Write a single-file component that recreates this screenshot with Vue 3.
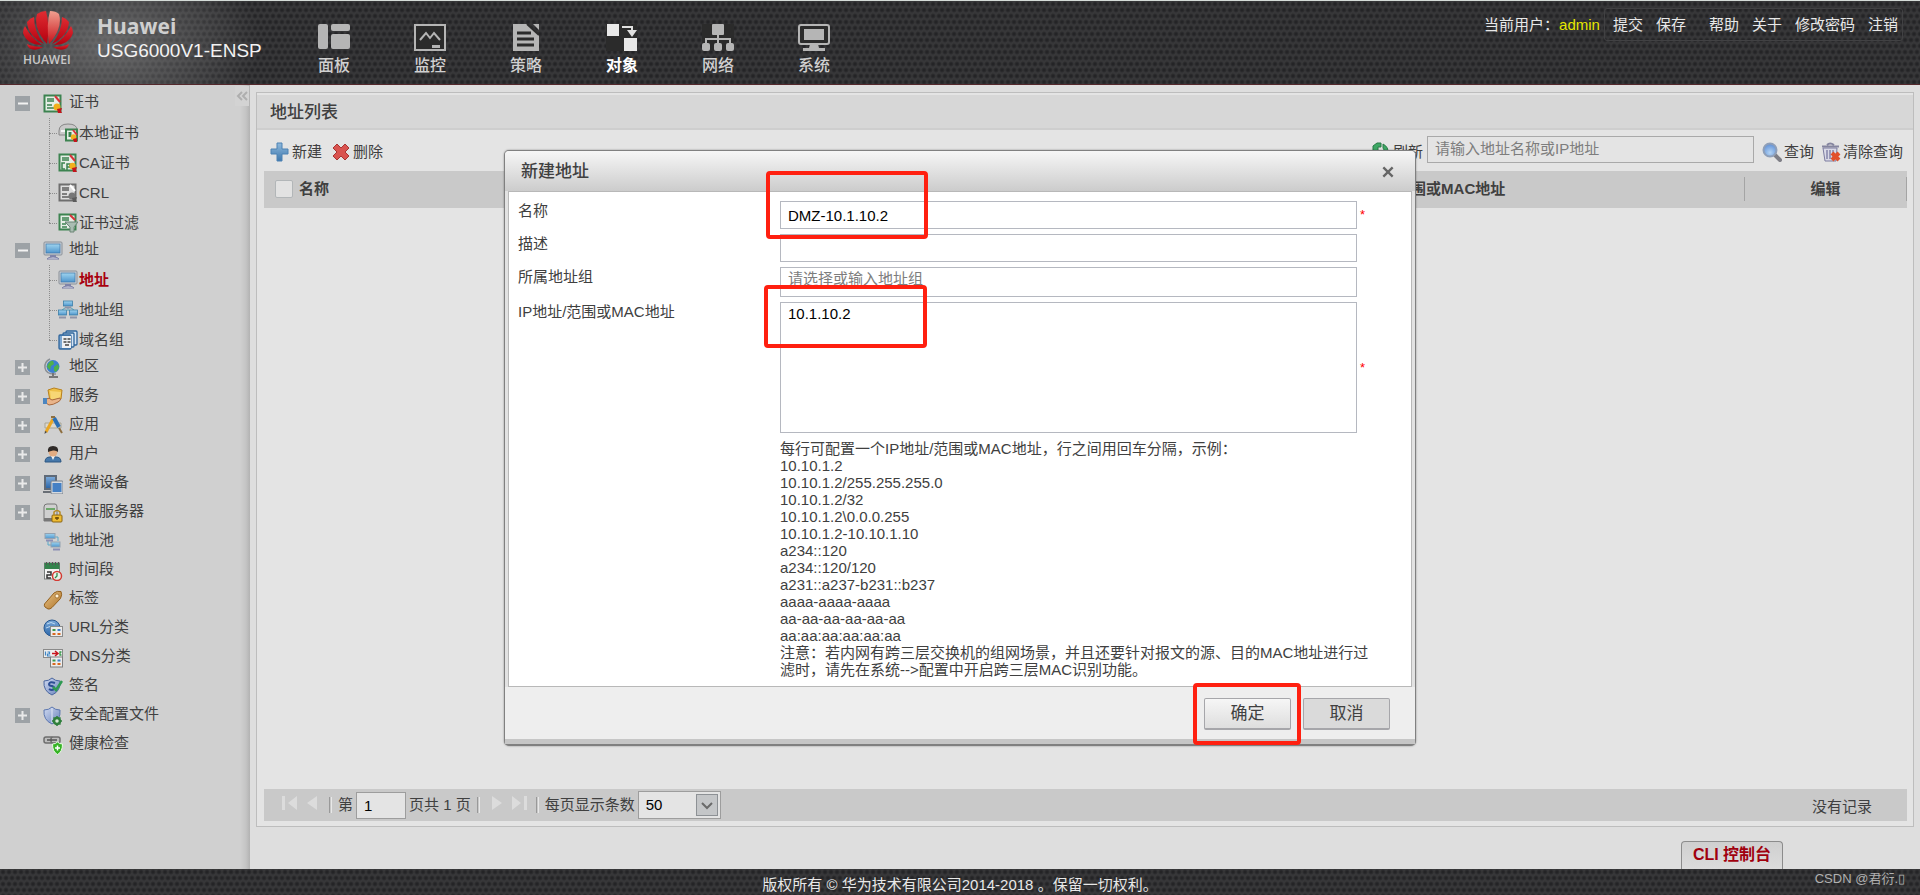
<script setup>
import { ref } from 'vue'

const nav = [
  { label: '面板', icon: 'n-board' },
  { label: '监控', icon: 'n-monitor' },
  { label: '策略', icon: 'n-policy' },
  { label: '对象', icon: 'n-object', active: true },
  { label: '网络', icon: 'n-network' },
  { label: '系统', icon: 'n-system' },
]

const tree = [
  {
    label: '证书', icon: 'i-cert', toggle: 'minus',
    children: [
      { label: '本地证书', icon: 'i-localcert' },
      { label: 'CA证书', icon: 'i-cacert' },
      { label: 'CRL', icon: 'i-crl' },
      { label: '证书过滤', icon: 'i-certfilter' },
    ],
  },
  {
    label: '地址', icon: 'i-pc', toggle: 'minus',
    children: [
      { label: '地址', icon: 'i-pc', active: true },
      { label: '地址组', icon: 'i-pcs' },
      { label: '域名组', icon: 'i-domain' },
    ],
  },
  { label: '地区', icon: 'i-globe', toggle: 'plus' },
  { label: '服务', icon: 'i-service', toggle: 'plus' },
  { label: '应用', icon: 'i-app', toggle: 'plus' },
  { label: '用户', icon: 'i-user', toggle: 'plus' },
  { label: '终端设备', icon: 'i-device', toggle: 'plus' },
  { label: '认证服务器', icon: 'i-server', toggle: 'plus' },
  { label: '地址池', icon: 'i-pool' },
  { label: '时间段', icon: 'i-time' },
  { label: '标签', icon: 'i-tag' },
  { label: 'URL分类', icon: 'i-url' },
  { label: 'DNS分类', icon: 'i-dns' },
  { label: '签名', icon: 'i-sign' },
  { label: '安全配置文件', icon: 'i-profile', toggle: 'plus' },
  { label: '健康检查', icon: 'i-health' },
]

const examples = [
  '10.10.1.2',
  '10.10.1.2/255.255.255.0',
  '10.10.1.2/32',
  '10.10.1.2\\0.0.0.255',
  '10.10.1.2-10.10.1.10',
  'a234::120',
  'a234::120/120',
  'a231::a237-b231::b237',
  'aaaa-aaaa-aaaa',
  'aa-aa-aa-aa-aa-aa',
  'aa:aa:aa:aa:aa:aa',
]

const name = ref('DMZ-10.1.10.2')
const desc = ref('')
const group = ref('')
const ips = ref('10.1.10.2')
const page = ref('1')
const size = ref('50')
const query = ref('')
</script>

<template>
  <div class="page">
    <svg class="defs" aria-hidden="true">
      <defs>
        <linearGradient id="g-screen" x1="0" y1="0" x2="0" y2="1"><stop offset="0" stop-color="#9fd4ef" /><stop offset="1" stop-color="#4f96cd" /></linearGradient>
        <linearGradient id="g-petal" x1="0" y1="0" x2="0" y2="1"><stop offset="0" stop-color="#e02c32" /><stop offset="1" stop-color="#b4000f" /></linearGradient>
        <linearGradient id="g-petal2" x1="0" y1="0" x2="0" y2="1"><stop offset="0" stop-color="#f0a090" /><stop offset="1" stop-color="#c81018" /></linearGradient>
        <linearGradient id="g-shield" x1="0" y1="0" x2="1" y2="1"><stop offset="0" stop-color="#d3dcf2" /><stop offset="1" stop-color="#6681bb" /></linearGradient>
        <linearGradient id="g-tag" x1="0" y1="0" x2="1" y2="1"><stop offset="0" stop-color="#e9c489" /><stop offset="1" stop-color="#ad7226" /></linearGradient>
        <linearGradient id="g-tree" x1="0" y1="0" x2="0" y2="1"><stop offset="0" stop-color="#7aa8d8" /><stop offset="1" stop-color="#2c67aa" /></linearGradient>
        <linearGradient id="g-plus" x1="0" y1="0" x2="0" y2="1"><stop offset="0" stop-color="#8fb9dc" /><stop offset="1" stop-color="#3f78ad" /></linearGradient>
        <radialGradient id="g-lens" cx=".5" cy=".7" r=".7"><stop offset="0" stop-color="#b4d4f4" /><stop offset="1" stop-color="#5b8cd4" /></radialGradient>
      </defs>

      <symbol id="n-board" viewBox="0 0 32 28"><g fill="#b5b5b5"><rect width="10" height="25" rx="2" /><rect x="13" width="19" height="7" rx="2" /><rect x="13" y="10" width="19" height="15" rx="2" /></g></symbol>
      <symbol id="n-monitor" viewBox="0 0 32 28"><rect x="1" y="1" width="30" height="25" fill="#2b2b2b" stroke="#b5b5b5" stroke-width="2" /><path d="M6 16l6-7 4 5 4-5 6 7" fill="none" stroke="#b5b5b5" stroke-width="2" /><rect x="18" y="21" width="8" height="3" fill="#b5b5b5" /></symbol>
      <symbol id="n-policy" viewBox="0 0 32 28"><path fill="#b5b5b5" d="M3 0h14l12 11v16H3z" /><path fill="#b5b5b5" d="M23 0h6v6z" /><path d="M17 0l12 11" stroke="#2b2b2b" stroke-width="2" /><path d="M7 9h14M7 15h17M7 21h17" stroke="#2b2b2b" stroke-width="3" /></symbol>
      <symbol id="n-object" viewBox="0 0 32 28"><rect width="31" height="27" fill="#2b2b2b" /><rect x="1" width="12" height="12" fill="#e8e8e8" /><rect x="18" y="14" width="13" height="13" fill="#e8e8e8" /><path d="M16 3h10v5" fill="none" stroke="#e0e0e0" stroke-width="2" /><path d="M21 6h10l-5 7z" fill="#e0e0e0" /></symbol>
      <symbol id="n-network" viewBox="0 0 32 28"><rect width="32" height="27" fill="#2b2b2b" /><g fill="#b5b5b5"><rect x="10" width="12" height="11" rx="1" /><rect y="19" width="8" height="8" rx="2" /><rect x="12" y="19" width="8" height="8" rx="2" /><rect x="24" y="19" width="8" height="8" rx="2" /></g><path d="M4 20v-5h24v5M16 10v10" fill="none" stroke="#b5b5b5" stroke-width="2" /></symbol>
      <symbol id="n-system" viewBox="0 0 32 28"><rect x="1" y="1" width="30" height="19" rx="2" fill="#2b2b2b" stroke="#b5b5b5" stroke-width="2" /><rect x="6" y="5" width="20" height="11" fill="#b5b5b5" /><path fill="#b5b5b5" d="M12 20h8l1 4h6v3H5v-3h6z" /></symbol>

      <symbol id="i-cert" viewBox="0 0 20 20"><rect x="1.5" y="1.5" width="16" height="16" fill="#e6eee6" stroke="#3c8350" stroke-width="2" /><path d="M4 5h7M4 7h7M4 11h5M4 14h7" stroke="#3c8350" stroke-width="1.3" /><path d="M12 2l5 6" stroke="#d8323a" stroke-width="2" /><circle cx="14" cy="13" r="3.5" fill="#f2b01c" /><path d="M14 15l5-1-1 3 1 2h-4z" fill="#c3141c" /></symbol>
      <symbol id="i-localcert" viewBox="0 0 20 20"><path d="M1 8Q1 1 10 1t9 6v5H1z" fill="#c9c9c9" stroke="#868686" /><path d="M3 8h12" stroke="#f4f4f4" stroke-width="2" /><rect x="8" y="6.500" width="11" height="11" fill="#e6eee6" stroke="#3c8350" stroke-width="2" /><rect x="10.500" y="9" width="3" height="5" fill="#3c8350" /><path d="M15 7l4 5" stroke="#d8323a" stroke-width="2" /><circle cx="15.500" cy="14" r="2.800" fill="#f2b01c" /><path d="M15 16l4-1v4h-3z" fill="#c3141c" /></symbol>
      <symbol id="i-cacert" viewBox="0 0 20 20"><rect x="1.500" y="1.500" width="16" height="16" fill="#e6eee6" stroke="#3c8350" stroke-width="2" /><path d="M4 5h7M4 7h7" stroke="#3c8350" stroke-width="1.300" /><path d="M7 10H4v6h3M9 17v-6h3v4M9 14h3" fill="none" stroke="#3c8350" stroke-width="1.500" /><path d="M12 2l5 6" stroke="#d8323a" stroke-width="2" /><circle cx="14.500" cy="13" r="3.200" fill="#f2b01c" /><path d="M14 15l5-1-1 3 1 2h-4z" fill="#c3141c" /></symbol>
      <symbol id="i-crl" viewBox="0 0 20 20"><rect x="1.500" y="1.500" width="16" height="16" fill="#dedede" stroke="#6e6e6e" stroke-width="2" /><path d="M4 5h7M4 7h7M4 11h5M4 14h7" stroke="#5f5f5f" stroke-width="1.300" /><path d="M12 2l5 6" stroke="#fff" stroke-width="2" /><circle cx="14" cy="13" r="3.500" fill="#777" /><path d="M14 15l5-1-1 3 1 2h-4z" fill="#5c5c5c" /></symbol>
      <symbol id="i-certfilter" viewBox="0 0 20 20"><rect x="1.500" y="1.500" width="16" height="15" fill="#e6eee6" stroke="#3c8350" stroke-width="2" /><path d="M4 5h7M4 7h7M4 11h4M4 14h5" stroke="#3c8350" stroke-width="1.300" /><path d="M12 2l5 5" stroke="#d8323a" stroke-width="2" /><path d="M7 9h13l-4 5v5h-4v-5z" fill="#a9bdb2" stroke="#6d8577" /></symbol>
      <symbol id="i-pc" viewBox="0 0 20 20"><rect x="1" y="1" width="18" height="13" rx="1" fill="#c8cdd3" stroke="#8a9098" /><rect x="3" y="3" width="14" height="9" fill="url(#g-screen)" stroke="#3e77a8" stroke-width=".7" /><path d="M7 14h6v2H7z" fill="#8085aa" /><path d="M4 18q1-2 6-2t6 2z" fill="#e6e6ee" stroke="#7b7fa6" /></symbol>
      <symbol id="i-pcs" viewBox="0 0 20 20"><path d="M10 7v4M3 11l5-4M17 11l-5-4" stroke="#45a0b8" /><g stroke="#3d7fa8" stroke-width=".8" fill="url(#g-screen)"><rect x="5.500" y="1" width="9" height="5" /><rect x=".5" y="10" width="8" height="5" /><rect x="11.500" y="10" width="8" height="5" /></g><path d="M1 17.500h7M12 17.500h7M7 7.500h6" stroke="#8e94a8" stroke-width="2" /></symbol>
      <symbol id="i-domain" viewBox="0 0 20 20"><g fill="#d6e4f2" stroke="#2f659c" stroke-width="1.300"><rect x="8" y="1" width="11" height="14" rx="1" /><rect x="5" y="3" width="11" height="14" rx="1" /><rect x="1" y="5" width="12" height="14" rx="1" fill="#7ba7d2" /></g><rect x="4" y="6" width="9" height="12" fill="#edf0f3" /><path d="M5.500 9h3M9.500 9h3M5.500 12h3M9.500 12h3M7 15h4" stroke="#444" stroke-width="1.300" /></symbol>
      <symbol id="i-globe" viewBox="0 0 20 20"><circle cx="10" cy="8.500" r="6.500" fill="#3c7fd0" /><path d="M5 6q3-4 5-3l1 3-3 2-1 4-3-3zM11 9l4-3 1 4-3 4-2-1z" fill="#4fb04a" /><path d="M7 1Q1 4 2 10t9 6h2" fill="none" stroke="#8a8f94" stroke-width="1.500" /><path d="M10 15v3M6 19h9" stroke="#777" stroke-width="2" /></symbol>
      <symbol id="i-service" viewBox="0 0 20 20"><path d="M5 3l6-2 8 2-1 9-11 2z" fill="#eec048" stroke="#b9811d" /><path d="M7 4l11 1-1 6-9 2z" fill="#f7d675" /><path d="M3 12q3-2 6 1l8-2q2 2-2 4-5 3-9 3l-3-2z" fill="#e9b48a" stroke="#a8683c" /><path d="M0 11h4v6H0z" fill="#4c86c0" /></symbol>
      <symbol id="i-app" viewBox="0 0 20 20"><path d="M2 7h16v5H2z" fill="#dcd8ce" stroke="#a9a595" /><path d="M10 3L3 16" stroke="#eaa622" stroke-width="3" /><path d="M11 2l5 9" stroke="#2a6fb5" stroke-width="4" /><path d="M16 12l3 5M8 1h4" stroke="#8e6f40" stroke-width="2" /><path d="M2 15l-.5 3L4 16z" fill="#444" /></symbol>
      <symbol id="i-user" viewBox="0 0 20 20"><path d="M2 17q0-5 5-5h6q5 0 5 5z" fill="#4678aa" stroke="#2c5682" /><path d="M8 11h4l-2 4z" fill="#f2f2f2" /><circle cx="10" cy="7" r="4.500" fill="#e2ac82" /><path d="M5 7q-1-6 5-6t5 6q-2-2-5-1.500T5 7z" fill="#2f2a28" /></symbol>
      <symbol id="i-device" viewBox="0 0 20 20"><rect x="1" y="1" width="13" height="15" fill="#5f6a78" /><rect x="3" y="3" width="9" height="11" fill="url(#g-tree)" /><path d="M0 18h9" stroke="#6a6f76" stroke-width="2" /><rect x="8" y="7" width="12" height="13" rx="1" fill="#d5dae0" stroke="#79808a" /><rect x="9.500" y="9" width="9" height="9" fill="#4580c4" /></symbol>
      <symbol id="i-server" viewBox="0 0 20 20"><path d="M1 4q0-3 3-3h8q2 0 2 3v14H1z" fill="#cfcfcf" stroke="#767676" /><path d="M3 6h9" stroke="#4d9b48" stroke-width="1.500" /><path d="M1 15h12v3H1z" fill="#777" /><rect x="9" y="12" width="10" height="7" rx="1" fill="#efbc33" stroke="#8a6413" /><path d="M11 12V9q3-3 6 0v3" fill="none" stroke="#b68a25" stroke-width="1.500" /><path d="M12 15h4M14 14v3" stroke="#6b4a08" stroke-width="1.300" /></symbol>
      <symbol id="i-pool" viewBox="0 0 20 20"><path d="M5 9v4h3M12 5h3v4" stroke="#5aa9c8" fill="none" /><g stroke="#93a1b0" fill="url(#g-screen)"><rect x="2" y="1.500" width="10" height="5" /><rect x="8" y="10" width="9" height="5" /></g><path d="M3 8.500h7M10 17.500h7" stroke="#8c8fb4" stroke-width="2" /></symbol>
      <symbol id="i-time" viewBox="0 0 20 20"><rect x="1.500" y="2" width="15" height="16" fill="#f3f3f3" stroke="#7a7f7d" /><rect x="1.500" y="2" width="15" height="6" fill="#33834c" /><path d="M3.500 1v3M6.500 1v3M9.500 1v3M12.500 1v3M15.500 1v3" stroke="#555" /><path d="M4 11h4v3H4v3h4" fill="none" stroke="#333" stroke-width="1.500" /><circle cx="14" cy="15" r="4.500" fill="#e7f1e8" stroke="#d33b33" stroke-width="1.500" /><path d="M14 12v3l-2 2" stroke="#2f8d4a" fill="none" stroke-width="1.300" /></symbol>
      <symbol id="i-tag" viewBox="0 0 20 20"><path d="M1.500 14L11 3q3-2.500 7-1.500 1.500 3-.5 7L9 17.500q-2 2-4 1.500l-3-2q-1-1-.5-3z" fill="url(#g-tag)" stroke="#93601d" /><circle cx="14" cy="6" r="2" fill="#fff3d8" stroke="#93601d" stroke-width=".7" /></symbol>
      <symbol id="i-url" viewBox="0 0 20 20"><circle cx="9" cy="9" r="8" fill="url(#g-tree)" stroke="#27578f" /><path d="M4 5q4-3 8 0M3 9q4-3 8 0" stroke="#bcd8f0" fill="none" /><rect x="7.500" y="7.500" width="12" height="10" fill="#ececec" stroke="#8a8a8a" /><path d="M9.500 11h3" stroke="#3a9a4c" stroke-width="2" /><path d="M14.500 11h3" stroke="#3f7fc6" stroke-width="2" /><path d="M9.500 15h3M14.500 15h3" stroke="#d8681f" stroke-width="2" /></symbol>
      <symbol id="i-dns" viewBox="0 0 20 20"><rect x=".5" y="1.500" width="19" height="8" fill="#eee" stroke="#8a8a8a" /><path d="M2.500 3.500v4M4.500 4h2v2h-2v2h3" stroke="#3f86c6" fill="none" stroke-width="1.200" /><path d="M9 5.500h5M12 3l3 2.500L12 8" stroke="#c8141c" fill="none" stroke-width="1.500" /><path d="M18.500 4H17v3h1.500" stroke="#3a9a4c" fill="none" stroke-width="1.300" /><rect x="7.500" y="9" width="12" height="10" fill="#ececec" stroke="#7d7d7d" /><path d="M9.500 12.500h3" stroke="#3a9a4c" stroke-width="2" /><path d="M14.500 12.500h3" stroke="#3f7fc6" stroke-width="2" /><path d="M9.500 16h3M14.500 16h3" stroke="#d8681f" stroke-width="2" /></symbol>
      <symbol id="i-sign" viewBox="0 0 20 20"><path d="M9 1q3 3 8 3 1 10-8 14Q0 14 1 4q5 0 8-3z" fill="url(#g-shield)" stroke="#4a669f" /><path d="M12 6q-5-2-6 1 0 2 3 2 3 1 2 3-2 2-5 0" fill="none" stroke="#2c4e94" stroke-width="2" /><path d="M10 10l3 3 6-9" fill="none" stroke="#2e9a51" stroke-width="2.500" /></symbol>
      <symbol id="i-profile" viewBox="0 0 20 20"><path d="M9 1q3 3 8 3 1 10-8 14Q0 14 1 4q5 0 8-3z" fill="url(#g-shield)" stroke="#5c77b0" /><path d="M9 2v15" stroke="#e2e8f6" /><circle cx="14" cy="15" r="3" fill="#d8ead8" stroke="#2f7f3c" stroke-width="2.500" /><path d="M14 10v2M14 18v2M9 15h2M17 15h2M10.500 11.500l1.500 1.500M16 17l1.500 1.500M17.500 11.500L16 13" stroke="#2f7f3c" stroke-width="1.500" /></symbol>
      <symbol id="i-health" viewBox="0 0 20 20"><rect x="1" y="2" width="9" height="6" rx="2" fill="#bdbdbd" stroke="#6d6d6d" stroke-width="1.500" /><rect x="8" y="2" width="9" height="6" rx="2" fill="#bdbdbd" stroke="#6d6d6d" stroke-width="1.500" /><path d="M4 5h10" stroke="#555" stroke-width="1.500" /><path d="M14.500 7q2 2 5 2 0 8-5 10.500Q9.500 17 9.500 9q3 0 5-2z" fill="#37b326" stroke="#eafbe6" /><path d="M14.500 10.500v5M12 13h5" stroke="#fff" stroke-width="1.500" /></symbol>
      <symbol id="t-plus" viewBox="0 0 16 16"><rect width="15" height="15" fill="#9da2a6" /><path d="M3 7.500h9M7.500 3v9" stroke="#e9e9e9" stroke-width="2" /></symbol>
      <symbol id="t-minus" viewBox="0 0 16 16"><rect width="15" height="15" fill="#9da2a6" /><path d="M3 7.500h10" stroke="#f2f2f2" stroke-width="2" /></symbol>
    </svg>

    <header class="top dots">
      <div class="brand">
        <svg class="logo" viewBox="0 0 50 40" role="img" aria-label="HUAWEI">
          <path fill="url(#g-petal)" d="M24 33Q10 17 14 3q4-3 9-3 4 14 1 33z" />
          <path fill="url(#g-petal2)" d="M26 33Q23 14 27 0q6 0 9 3 4 14-10 30z" />
          <path fill="url(#g-petal)" d="M21 33Q5 25 4 11q3-4 7-5 0 15 10 27zM29 33q16-8 17-22-3-4-7-5 0 15-10 27z" />
          <path fill="url(#g-petal)" d="M19 34Q4 34 0 22q0-4 2-7 6 12 17 19zM31 34q15 0 19-12 0-4-2-7-6 12-17 19z" />
          <path fill="url(#g-petal)" d="M20 36q-6 4-12 2-3-1-4-5 6 3 16 3zM30 36q6 4 12 2 3-1 4-5-6 3-16 3z" />
        </svg>
        <span class="logo-text">HUAWEI</span>
      </div>
      <div class="product">
        <strong>Huawei</strong>
        <span>USG6000V1-ENSP</span>
      </div>
      <nav class="nav">
        <a v-for="n in nav" :key="n.label" href="#" :class="{ active: n.active }">
          <svg><use :href="'#' + n.icon" /></svg>
          <span>{{ n.label }}</span>
        </a>
      </nav>
      <div class="account">
        <span class="who">当前用户：<b>admin</b></span>
        <div class="links">
          <a href="#">提交</a><a href="#" class="wide">保存</a><a href="#">帮助</a><a href="#">关于</a><a href="#">修改密码</a><a href="#">注销</a>
        </div>
      </div>
    </header>

    <div class="middle">
      <aside class="side">
        <button class="collapse" type="button" aria-label="收起">
          <svg viewBox="0 0 12 10"><path d="M6 1L2 5l4 4M11 1L7 5l4 4" fill="none" stroke="#aeaeae" stroke-width="2" /></svg>
        </button>
        <ul class="tree">
          <li v-for="t in tree" :key="t.label">
            <a class="row" href="#">
              <span class="toggle"><svg v-if="t.toggle"><use :href="'#t-' + t.toggle" /></svg></span>
              <svg class="ico"><use :href="'#' + t.icon" /></svg>
              <span class="txt">{{ t.label }}</span>
            </a>
            <ul v-if="t.children" class="sub">
              <li v-for="c in t.children" :key="c.label">
                <a class="child" :class="{ active: c.active }" href="#">
                  <svg class="ico"><use :href="'#' + c.icon" /></svg>{{ c.label }}
                </a>
              </li>
            </ul>
          </li>
        </ul>
      </aside>

      <main class="main">
        <section class="panel">
          <h1>地址列表</h1>
          <div class="inner">
            <div class="tools">
              <button type="button">
                <svg viewBox="0 0 20 20"><path d="M7 1h5v6h6v5h-6v7H7v-7H1V7h6z" fill="url(#g-plus)" stroke="#4c82b4" stroke-linejoin="round" /></svg>新建
              </button>
              <button type="button">
                <svg viewBox="0 0 20 20"><path d="M6 2l4 4 4-4 4 4-4 4 4 4-4 4-4-4-4 4-4-4 4-4-4-4z" fill="#d9534f" stroke="#a83432" stroke-linejoin="round" /></svg>删除
              </button>
              <div class="find">
                <button type="button">
                  <svg viewBox="0 0 20 20"><path d="M2 11V4l4-3h4v4H7v6zM12 2q6 3 5 10l2 1-5 5-3-6 3 1q0-5-2-7zM3 13h7v4H5z" fill="#3da764" stroke="#287b46" /></svg>刷新
                </button>
                <input v-model="query" class="search" type="text" placeholder="请输入地址名称或IP地址" aria-label="搜索" />
                <button type="button">
                  <svg viewBox="0 0 20 20"><path d="M13 13l5 5" stroke="#7e7e86" stroke-width="4" stroke-linecap="round" /><circle cx="8" cy="8" r="6.500" fill="url(#g-lens)" stroke="#8f9fb8" stroke-width="2" /></svg>查询
                </button>
                <button type="button">
                  <svg viewBox="0 0 20 20"><path d="M2 6h14l-1 13H4z" fill="#d9d9e6" stroke="#7c7ca0" /><path d="M6 8v9M9 8v9M12 8v9" stroke="#8585ab" stroke-width="1.500" /><path d="M1 4.500h17M6 3q3-3 7 0" stroke="#85859f" stroke-width="2" fill="none" /><path d="M11 11l7 7M18 11l-7 7" stroke="#e2502c" stroke-width="4" /></svg>清除查询
                </button>
              </div>
            </div>
            <table class="grid">
              <colgroup><col /><col class="c-ip" /><col class="c-edit" /></colgroup>
              <thead>
                <tr>
                  <th class="name"><label><input type="checkbox" />名称</label></th>
                  <th><span>IP地址/范围或MAC地址</span></th>
                  <th><span>编辑</span></th>
                </tr>
              </thead>
            </table>
            <div class="pager">
              <button type="button" aria-label="首页"><svg viewBox="0 0 16 16"><path d="M0 1h3v14H0zM15 1v14L6 8z" fill="#dcdcdc" /></svg></button>
              <button type="button" aria-label="上一页"><svg viewBox="0 0 16 16"><path d="M13 1v14L3 8z" fill="#dcdcdc" /></svg></button>
              <i></i>
              <label for="pg">第</label>
              <input id="pg" v-model="page" type="text" />
              <span>页共 1 页</span>
              <i></i>
              <button type="button" aria-label="下一页"><svg viewBox="0 0 16 16"><path d="M3 1v14l10-7z" fill="#dcdcdc" /></svg></button>
              <button type="button" aria-label="末页"><svg viewBox="0 0 16 16"><path d="M13 1h3v14h-3zM1 1v14l9-7z" fill="#dcdcdc" /></svg></button>
              <i></i>
              <label for="sz">每页显示条数</label>
              <div class="drop">
                <select id="sz" v-model="size"><option>50</option></select>
                <svg viewBox="0 0 22 22"><rect x=".5" y=".5" width="21" height="21" fill="#c4c6c8" stroke="#8d9195" /><path d="M6 9l5 5 5-5" fill="none" stroke="#6a6a6a" stroke-width="2" /></svg>
              </div>
              <span class="none">没有记录</span>
            </div>
          </div>
        </section>
        <div class="console"><button type="button">CLI 控制台</button></div>
      </main>
    </div>

    <footer class="foot dots">
      <span>版权所有 © 华为技术有限公司2014-2018 。保留一切权利。</span>
      <small>CSDN @君衍.▯</small>
    </footer>

    <div class="mask">
      <form class="dialog" role="dialog" aria-labelledby="dlg-title" @submit.prevent>
        <div class="head">
          <h2 id="dlg-title">新建地址</h2>
          <button type="button" aria-label="关闭"><svg viewBox="0 0 12 12"><path d="M2 2l8 8M10 2l-8 8" stroke="#666" stroke-width="2" /></svg></button>
        </div>
        <div class="body">
          <label for="f-name">名称</label>
          <div class="cell"><input id="f-name" v-model="name" type="text" /><div class="mark m1"></div></div>
          <em>*</em>
          <label for="f-desc">描述</label>
          <div class="cell"><input id="f-desc" v-model="desc" type="text" /></div>
          <em></em>
          <label for="f-group">所属地址组</label>
          <div class="cell"><input id="f-group" v-model="group" class="tall" type="text" placeholder="请选择或输入地址组" /></div>
          <em></em>
          <label for="f-ip">IP地址/范围或MAC地址</label>
          <div class="cell"><textarea id="f-ip" v-model="ips"></textarea><div class="mark m2"></div></div>
          <em>*</em>
          <div class="help">
            <p>每行可配置一个IP地址/范围或MAC地址，行之间用回车分隔，示例：</p>
            <p v-for="e in examples" :key="e">{{ e }}</p>
            <p>注意：若内网有跨三层交换机的组网场景，并且还要针对报文的源、目的MAC地址进行过滤时，请先在系统--&gt;配置中开启跨三层MAC识别功能。</p>
          </div>
        </div>
        <div class="actions">
          <div class="cell"><button type="submit">确定</button><div class="mark m3"></div></div>
          <button type="button" class="cancel">取消</button>
        </div>
      </form>
    </div>
  </div>
</template>

<style>
body { margin: 0; }
</style>

<style scoped>
* { box-sizing: border-box; }
.page {
  position: relative;
  display: flex;
  flex-direction: column;
  min-height: 100vh;
  background: #dedede;
  color: #404040;
  font: 15px/20px "Liberation Sans", "Noto Sans CJK SC", sans-serif;
}
.defs { position: absolute; width: 0; height: 0; }
a { color: inherit; text-decoration: none; }
button, input, select, textarea { font: inherit; color: inherit; margin: 0; }
button { border: 0; background: none; padding: 0; }
ul { list-style: none; margin: 0; padding: 0; }

.dots {
  background-color: #373739;
  background-image:
    radial-gradient(circle at 3px 3px, #242426 1px, transparent 3px),
    radial-gradient(circle at 3px 3px, #242426 1px, transparent 3px);
  background-size: 6px 12px;
  background-position: 0 0, 3px 6px;
}
.top {
  display: flex;
  height: 85px;
  border-top: 1px solid #d5dcd8;
  border-bottom: 1px solid #54282c;
  background-image:
    radial-gradient(ellipse 150px 100px at 110px 42px, rgba(160, 160, 160, .5), transparent),
    radial-gradient(circle at 3px 3px, #242426 1px, transparent 3px),
    radial-gradient(circle at 3px 3px, #242426 1px, transparent 3px);
  background-size: 100% 100%, 6px 12px, 6px 12px;
  background-position: 0 0, 0 0, 3px 6px;
}
.brand { width: 97px; padding: 10px 0 0 23px; display: flex; flex-direction: column; }
.logo { width: 50px; height: 40px; }
.logo-text { font: 600 12px/12px "Open Sans", sans-serif; color: #c9c9c9; margin-top: 3px; }
.product { width: 189px; padding-top: 12px; display: flex; flex-direction: column; }
.product strong { font: bold 21px/26px "Open Sans", sans-serif; color: #cfcfcf; }
.product span { font-size: 19px; line-height: 24px; color: #f2f2f2; }
.nav { display: flex; }
.nav a { width: 96px; display: flex; flex-direction: column; align-items: center; padding-top: 23px; color: #d0d0d0; font-size: 16px; font-weight: 500; }
.nav svg { width: 32px; height: 28px; }
.nav span { line-height: 24px; margin-top: 2px; }
.nav .active { color: #fff; font-weight: bold; }
.account { margin-left: auto; display: flex; align-items: flex-start; padding: 7px 17px 0 0; color: #e8e8e8; }
.who { line-height: 33px; margin-right: 4px; }
.who b { font-weight: normal; color: #e6e600; }
.links { display: flex; border: 1px solid #414143; border-radius: 3px; padding: 0 4px 0 8px; height: 33px; line-height: 31px; gap: 13px; }
.links .wide { margin-right: 10px; }

.middle { flex: 1; display: flex; }
.side {
  position: relative;
  width: 250px;
  padding-top: 4px;
  background: linear-gradient(to right, #d0d0d0 240px, #c4c4c4 246px, #b2b2b2 250px);
}
.collapse { position: absolute; right: 1px; top: 1px; width: 14px; height: 20px; background: #d3d3d3; }
.collapse svg { width: 12px; height: 10px; display: block; margin: 1px; }
.row { display: flex; align-items: center; height: 29px; padding-left: 15px; }
.toggle { width: 28px; height: 16px; }
.toggle svg { width: 16px; height: 16px; display: block; }
.ico { width: 20px; height: 20px; flex: none; }
.txt { margin-left: 6px; padding-bottom: 4px; }
.sub { position: relative; padding-left: 49px; margin-bottom: -2px; }
.sub::before { content: ""; position: absolute; left: 49px; top: 0; bottom: 15px; border-left: 1px dotted #8c8c8c; }
.child { display: flex; align-items: center; height: 30px; gap: 1px; }
.child::before { content: ""; width: 8px; border-top: 1px dotted #8c8c8c; }
.child.active { color: #a8000e; font-weight: bold; }

.main { flex: 1; min-width: 0; display: flex; flex-direction: column; padding: 7px 6px 0; }
.panel { flex: 1; display: flex; flex-direction: column; border: 1px solid #bdbdbd; background: #e4e4e4; }
h1 { margin: 2px 0 0; padding-left: 13px; height: 35px; background: #d7d7d7; border-bottom: 2px solid #cecece; font-size: 17px; line-height: 35px; font-weight: 500; }
.inner { flex: 1; display: flex; flex-direction: column; padding: 4px 6px 5px 7px; }
.tools { display: flex; align-items: center; height: 37px; padding: 0 4px 2px 6px; gap: 9px; }
.tools button { display: flex; align-items: center; gap: 2px; }
.tools svg { width: 20px; height: 20px; }
.find { margin-left: auto; display: flex; align-items: center; gap: 7px; }
.search { width: 327px; height: 27px; margin: 0 1px 4px -3px; border: 1px solid #a9a9a9; background: #e4e4e4; padding: 0 7px 2px; }
.search::placeholder, .tall::placeholder { color: #7d7d7d; opacity: 1; }
.grid { width: 100%; table-layout: fixed; border-collapse: collapse; background: #c9c9c9; }
.c-ip { width: 636px; }
.c-edit { width: 162px; }
th { height: 37px; padding: 0 0 2px; }
th span { display: block; border-right: 1px solid #a4a4a4; line-height: 24px; }
.name { text-align: left; padding-left: 11px; }
.name label { display: flex; align-items: center; gap: 6px; }
.name input { appearance: none; width: 18px; height: 18px; border: 1px solid #b2b6b8; border-radius: 2px; background: #e2e2e2; }
.pager { margin-top: auto; height: 32px; background: #c9c9c9; display: flex; align-items: center; padding: 0 35px 0 15px; }
.pager button { height: 16px; width: 16px; margin: 0 3px 5px; }
.pager button svg { width: 16px; height: 16px; display: block; }
.pager i { width: 3px; height: 16px; border-left: 1px solid #999; border-right: 1px solid #e8e8e8; margin: 0 6px; }
.pager input { width: 50px; height: 27px; border: 1px solid #9d9d9d; background: #e4e4e4; color: #000; padding: 0 7px; margin: 0 3px; }
.drop { position: relative; width: 83px; height: 28px; margin-left: 3px; }
.drop select { appearance: none; width: 100%; height: 100%; border: 1px solid #9d9d9d; border-radius: 0; background: #e4e4e4; color: #000; padding: 0 7px; }
.drop svg { position: absolute; right: 3px; top: 3px; width: 22px; height: 22px; pointer-events: none; }
.none { margin-left: auto; padding-top: 4px; }
.console { height: 42px; padding: 14px 131px 0 0; display: flex; justify-content: flex-end; }
.console button { width: 102px; height: 28px; border: 1px solid #8c8c8c; border-bottom: 0; border-radius: 4px 4px 0 0; background: linear-gradient(#cfcfcf, #dcdcdc); color: #a0000e; font-size: 16px; font-weight: bold; padding-bottom: 2px; }

.foot { position: relative; height: 26px; display: flex; justify-content: center; color: #e8e8e8; line-height: 31px; }
.foot small { position: absolute; right: 15px; top: 0; font-size: 13px; line-height: 19px; color: #b0b0b0; }

.mask { position: absolute; inset: 0; display: flex; justify-content: center; align-items: flex-start; padding-top: 150px; }
.dialog { width: 912px; border: 1px solid #808080; border-bottom-width: 2px; border-radius: 5px; background: #e2e2e2; box-shadow: 0 0 2px rgba(0, 0, 0, .4); }
.head { display: flex; align-items: center; height: 40px; padding: 1px 20px 0 16px; border-radius: 4px 4px 0 0; background: linear-gradient(#f6f6f6, #cccccc); }
.head h2 { margin: 0; font-size: 17px; font-weight: 500; }
.head button { margin-left: auto; height: 14px; }
.head svg { width: 14px; height: 14px; display: block; }
.body {
  display: grid;
  grid-template-columns: 262px 577px 1fr;
  row-gap: 5px;
  margin: 0 3px;
  padding: 9px 37px 8px 9px;
  border: 1px solid #b8b8b8;
  background: #fff;
}
.cell { position: relative; display: flex; }
.cell input, .cell textarea { width: 100%; height: 28px; border: 1px solid #b5b8c0; background: #fff; padding: 1px 7px 0; color: #000; }
.cell .tall { height: 30px; padding-bottom: 9px; }
.cell textarea { height: 131px; resize: none; }
em { color: #f00; font: 13px/16px "Liberation Sans", sans-serif; align-self: center; padding-left: 3px; }
.help { grid-column: 2 / -1; margin-top: 2px; line-height: 17px; }
.help p { margin: 0; }
.actions { display: flex; justify-content: flex-end; gap: 12px; height: 57px; padding: 11px 25px 0 0; background: #eee; border-bottom: 5px solid #c6c6c6; }
.actions button { width: 87px; height: 32px; border: 1px solid #a6a6aa; border-bottom-width: 2px; border-radius: 2px; background: linear-gradient(#f6f6f6, #dedede); font-size: 17px; }
.actions .cancel { background: #dadada; }
.mark { position: absolute; border: 4px solid #ff2010; border-radius: 4px; pointer-events: none; }
.m1 { left: -14px; top: -30px; width: 162px; height: 68px; z-index: 1; }
.m2 { left: -16px; top: -17px; width: 163px; height: 63px; z-index: 1; }
.m3 { left: -11px; top: -15px; width: 108px; height: 62px; }
</style>
